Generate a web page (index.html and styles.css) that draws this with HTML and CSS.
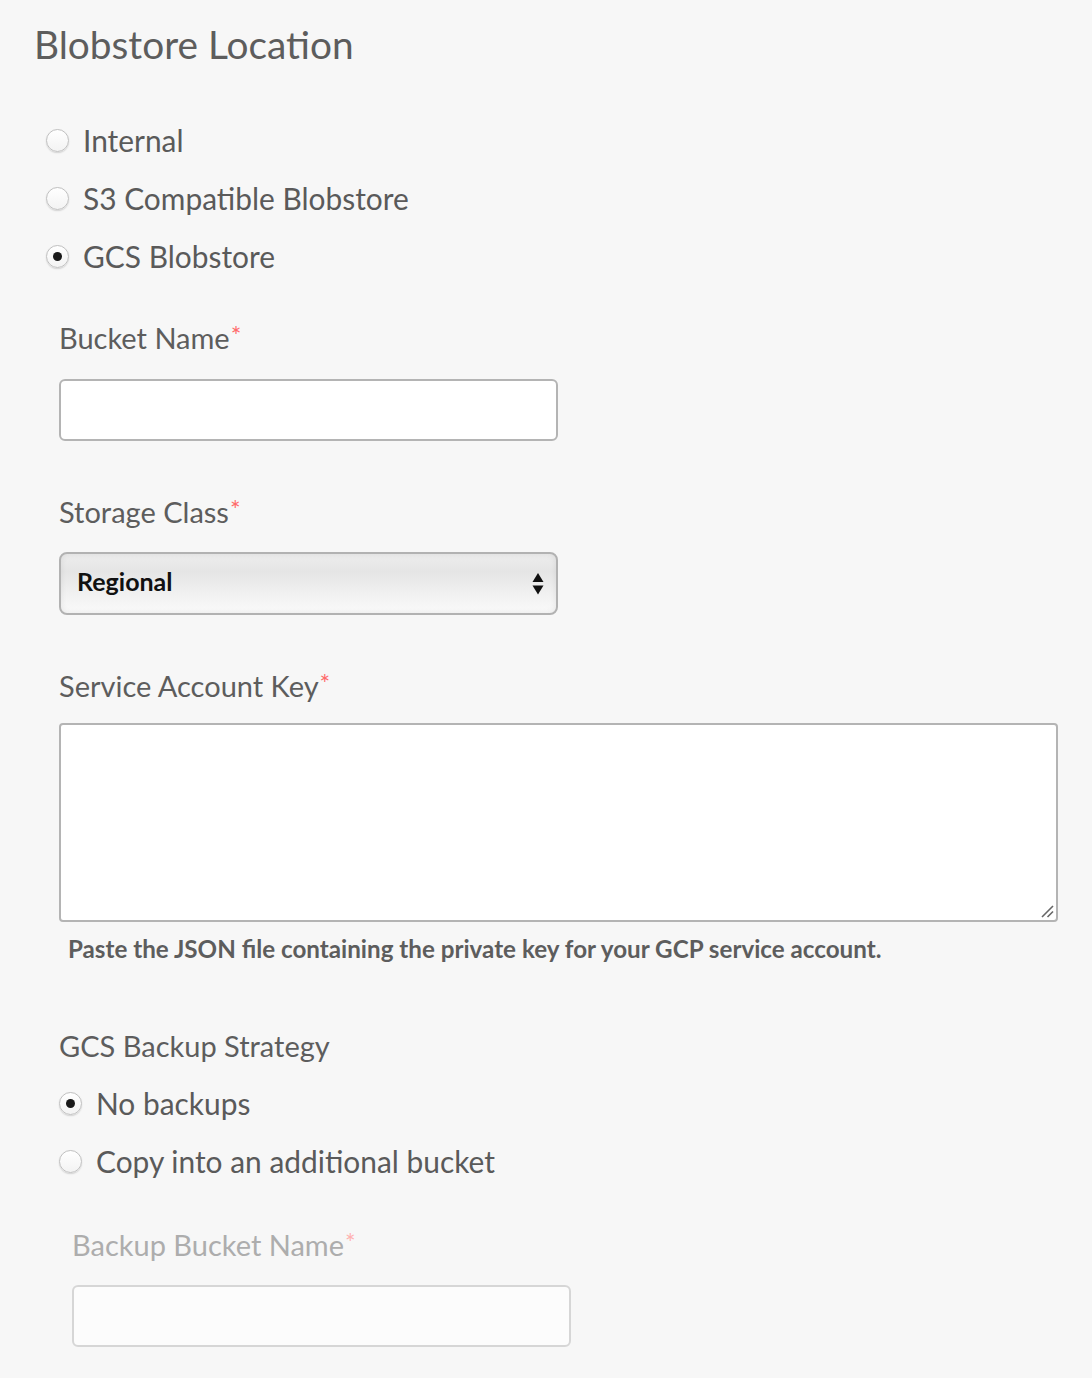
FILE: index.html
```html
<!DOCTYPE html>
<html>
<head>
<meta charset="utf-8">
<link rel="stylesheet" href="styles.css">
</head>
<body>
<div class="page">
  <h2 class="title">Blobstore Location</h2>
  <div class="radio-group top-radios">
    <label class="radio-row"><span class="radio"></span><span class="radio-label">Internal</span></label>
    <label class="radio-row"><span class="radio"></span><span class="radio-label">S3 Compatible Blobstore</span></label>
    <label class="radio-row"><span class="radio checked"></span><span class="radio-label">GCS Blobstore</span></label>
  </div>

  <div class="fields">
    <div class="field">
      <div class="field-label">Bucket Name<span class="req">*</span></div>
      <div class="text-input"></div>
    </div>

    <div class="field gap-lg">
      <div class="field-label">Storage Class<span class="req">*</span></div>
      <div class="select">
        <span class="select-value">Regional</span>
        <svg class="select-arrows" width="12" height="22" viewBox="0 0 12 22"><path d="M6 0 L11.5 9 L0.5 9 Z" fill="#111"/><path d="M0.5 12.5 L11.5 12.5 L6 21.5 Z" fill="#111"/></svg>
      </div>
    </div>

    <div class="field gap-lg">
      <div class="field-label">Service Account Key<span class="req">*</span></div>
      <div class="textarea">
        <svg class="resize" width="14" height="14" viewBox="0 0 14 14"><path d="M2 13 L13 2" stroke="#666" stroke-width="1.6"/><path d="M7.5 13 L13 7.5" stroke="#666" stroke-width="1.6"/></svg>
      </div>
      <div class="help">Paste the JSON file containing the private key for your GCP service account.</div>
    </div>

    <div class="field backup">
      <div class="field-label">GCS Backup Strategy</div>
      <div class="radio-group">
        <label class="radio-row"><span class="radio checked"></span><span class="radio-label">No backups</span></label>
        <label class="radio-row"><span class="radio"></span><span class="radio-label">Copy into an additional bucket</span></label>
      </div>
      <div class="field disabled">
        <div class="field-label">Backup Bucket Name<span class="req">*</span></div>
        <div class="text-input"></div>
      </div>
    </div>
  </div>
</div>
</body>
</html>
```

FILE: styles.css
```css
html, body {
  margin: 0;
  padding: 0;
  background: #f7f7f7;
}
body {
  font-family: Lato, "Noto Sans", sans-serif;
  color: #5a5a5a;
}
.page {
  padding: 20px 0 0 34px;
}
.title {
  margin: 0;
  font-size: 38.8px;
  line-height: 48px;
  font-weight: 400;
  color: #5d5d5d;
}
.radio-group {
  display: flex;
  flex-direction: column;
}
.top-radios {
  margin-top: 43px;
  padding-left: 12px;
}
.radio-row {
  display: flex;
  align-items: center;
  height: 58px;
  gap: 14px;
}
.radio {
  width: 21px;
  height: 21px;
  border-radius: 50%;
  border: 1px solid #c0c0c0;
  background: linear-gradient(#ffffff, #f3f3f3);
  box-shadow: 0 1px 1.5px rgba(0,0,0,0.15);
  position: relative;
  flex: none;
}
.radio.checked::after {
  content: "";
  position: absolute;
  left: 6px;
  top: 6px;
  width: 9px;
  height: 9px;
  border-radius: 50%;
  background: #1a1a1a;
}
.radio-label {
  font-size: 29.9px;
  line-height: 58px;
  color: #5a5a5a;
}
.fields {
  padding-left: 25px;
  margin-top: 33px;
}
.field-label {
  font-size: 29px;
  line-height: 40px;
  color: #5d5d5d;
}
.req {
  color: #ff6a6a;
  font-size: 25px;
  line-height: 0;
  vertical-align: 4px;
  margin-left: 1px;
}
.text-input {
  box-sizing: border-box;
  width: 499px;
  height: 62px;
  margin-top: 21px;
  border: 2px solid #b4b4b4;
  border-radius: 6px;
  background: #fff;
}
.gap-lg {
  margin-top: 51px;
}
.select {
  box-sizing: border-box;
  width: 499px;
  height: 63px;
  margin-top: 20px;
  border: 2px solid #b2b2b2;
  border-radius: 8px;
  background: linear-gradient(to bottom, #ededed 0%, #e5e5e5 30%, #f0f0f0 65%, #fafafa 100%);
  box-shadow: inset 0 0 6px rgba(0,0,0,0.08);
  display: flex;
  align-items: center;
  justify-content: space-between;
  padding: 0 12px 0 16px;
}
.select-value {
  font-size: 25px;
  font-weight: 700;
  color: #111;
  padding-bottom: 6px;
}
.textarea {
  box-sizing: border-box;
  width: 999px;
  height: 199px;
  margin-top: 17px;
  border: 2px solid #b4b4b4;
  border-radius: 4px;
  background: #fff;
  position: relative;
}
.resize {
  position: absolute;
  right: 2px;
  bottom: 2px;
}
.help {
  margin-top: 12px;
  padding-left: 9px;
  font-size: 24.2px;
  line-height: 30px;
  font-weight: 700;
  color: #5d5d5d;
}
.backup {
  margin-top: 62px;
}
.backup .radio-group {
  margin-top: 8px;
}
.disabled {
  margin-top: 35px;
  padding-left: 13px;
}
.disabled .field-label {
  color: #adadad;
}
.disabled .req {
  color: #ffb2b2;
}
.disabled .text-input {
  margin-top: 20px;
  border-color: #d6d6d6;
  background: #fcfcfc;
}
```
